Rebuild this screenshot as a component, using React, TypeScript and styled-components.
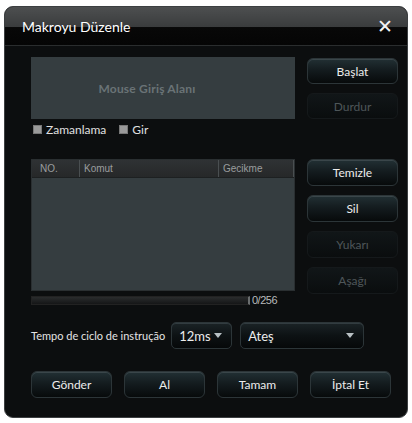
import React from 'react';
import styled, { createGlobalStyle } from 'styled-components';

const GlobalStyle = createGlobalStyle`
  html, body {
    margin: 0;
    padding: 0;
    background: #fff;
  }
  body {
    font-family: Lato, "Open Sans", sans-serif;
    font-weight: 400;
  }
`;

const Dialog = styled.div`
  margin: 6px 2px 3px 4px;
  width: 404px;
  height: 412px;
  box-sizing: border-box;
  border: 1px solid #3c3f41;
  border-radius: 9px;
  background: #0c0e0f;
  overflow: hidden;
  display: flex;
  flex-direction: column;
`;

const TitleBar = styled.div`
  height: 38px;
  flex: none;
  display: flex;
  align-items: center;
  justify-content: space-between;
  padding: 0 14px 0 17px;
  background: linear-gradient(#4d4f50 0%, #3a3c3d 52%, #080808 54%, #050505 100%);
  border-bottom: 1px solid #2a2d2e;
  color: #fff;
  font-size: 14px;
`;

const CloseButton = styled.span`
  font-family: "DejaVu Sans", sans-serif;
  font-size: 19px;
  font-weight: bold;
  line-height: 1;
  color: #f4f4f4;
`;

const Body = styled.div`
  flex: 1;
  padding: 11px 0 0 26px;
  display: flex;
  flex-direction: column;
`;

const Section = styled.div`
  display: grid;
  grid-template-columns: 264px 91px;
  column-gap: 12px;
  align-items: start;
`;

const LeftCol = styled.div`
  display: flex;
  flex-direction: column;
`;

const RightCol = styled.div<{ $top?: number }>`
  display: flex;
  flex-direction: column;
  gap: 9px;
  padding-top: ${p => p.$top || 0}px;
`;

const MouseArea = styled.div`
  height: 62px;
  background: #353d40;
  display: flex;
  align-items: center;
  justify-content: center;
  padding-right: 32px;
  color: #6a7376;
  font-weight: bold;
  font-size: 12px;
  letter-spacing: 0.2px;
`;

const CheckRow = styled.div`
  display: flex;
  align-items: center;
  height: 18px;
  margin-top: 1px;
  padding-left: 2px;
  gap: 13px;
`;

const CheckItem = styled.label`
  display: flex;
  align-items: center;
  gap: 4px;
  color: #e0e0e0;
  font-size: 12px;
`;

const Box = styled.span`
  width: 7px;
  height: 7px;
  background: #9a9a9a;
  border: 1px solid #777;
`;

const Button = styled.div<{ $disabled?: boolean; $h?: number }>`
  height: ${p => p.$h || 26}px;
  box-sizing: border-box;
  border-radius: 6px;
  display: flex;
  align-items: center;
  justify-content: center;
  font-size: 12px;
  color: ${p => (p.$disabled ? '#4e5659' : '#ececec')};
  border: 1px solid ${p => (p.$disabled ? '#15191b' : '#2c3538')};
  background: ${p =>
    p.$disabled
      ? 'linear-gradient(#111618, #0a0d0e)'
      : 'linear-gradient(#223034 0%, #141c1f 45%, #070a0b 100%)'};
  box-shadow: ${p => (p.$disabled ? 'none' : 'inset 0 1px 0 #3a464a')};
`;

const Table = styled.div`
  height: 132px;
  margin-top: 21px;
  background: #353d40;
  border: 1px solid #2a2f31;
  box-sizing: border-box;
  display: flex;
  flex-direction: column;
`;

const HeaderRow = styled.div`
  height: 17px;
  display: grid;
  grid-template-columns: 48px 139px 1fr;
  background: linear-gradient(#2f3234, #262829);
  border-bottom: 1px solid #1d2021;
`;

const HeaderCell = styled.div`
  font-family: "Liberation Sans", Arial, sans-serif;
  font-size: 10px;
  color: #9a9d9e;
  display: flex;
  align-items: center;
  padding-left: 4px;
  border-right: 1px solid #4a4f51;
  &:first-child { padding-left: 8px; }
`;

const ProgressRow = styled.div`
  display: flex;
  align-items: center;
  height: 14px;
  margin-top: 2px;
  gap: 2px;
`;

const ProgressTrack = styled.div`
  width: 216px;
  height: 7px;
  border: 1px solid #222;
  background: linear-gradient(#2a2c2d, #151617);
  border-right: 2px solid #6a6d6e;
`;

const Counter = styled.span`
  font-family: "Liberation Sans", Arial, sans-serif;
  font-size: 11px;
  letter-spacing: -0.5px;
  color: #b8bbbc;
`;

const TempoRow = styled.div`
  display: flex;
  align-items: center;
  margin-top: 15px;
  height: 27px;
`;

const TempoLabel = styled.span`
  font-size: 11px;
  color: #e4e4e4;
  white-space: nowrap;
  margin-right: 6px;
`;

const Select = styled.div<{ $w: number }>`
  width: ${p => p.$w}px;
  height: 27px;
  box-sizing: border-box;
  margin-right: 8px;
  border-radius: 5px;
  border: 1px solid #2c3538;
  background: linear-gradient(#1b2326 0%, #0d1214 50%, #060809 100%);
  box-shadow: inset 0 1px 0 #323c40;
  display: flex;
  align-items: center;
  justify-content: space-between;
  padding: 0 9px 0 7px;
  color: #ececec;
  font-size: 13px;
`;

const Arrow = styled.span`
  width: 0;
  height: 0;
  border-left: 4px solid transparent;
  border-right: 4px solid transparent;
  border-top: 5px solid #b8c0c4;
`;

const BottomRow = styled.div`
  display: flex;
  justify-content: space-between;
  width: 360px;
  margin-top: 22px;
`;

const WideButton = styled(Button)`
  width: 81px;
`;

export default function App() {
  return (
    <>
      <GlobalStyle />
      <Dialog>
        <TitleBar>
          <span>Makroyu Düzenle</span>
          <CloseButton>✕</CloseButton>
        </TitleBar>
        <Body>
          <Section>
            <LeftCol>
              <MouseArea>Mouse Giriş Alanı</MouseArea>
              <CheckRow>
                <CheckItem><Box />Zamanlama</CheckItem>
                <CheckItem><Box />Gir</CheckItem>
              </CheckRow>
            </LeftCol>
            <RightCol $top={1}>
              <Button>Başlat</Button>
              <Button $disabled>Durdur</Button>
            </RightCol>
          </Section>
          <Section>
            <LeftCol>
              <Table>
                <HeaderRow>
                  <HeaderCell>NO.</HeaderCell>
                  <HeaderCell>Komut</HeaderCell>
                  <HeaderCell>Gecikme</HeaderCell>
                </HeaderRow>
              </Table>
              <ProgressRow>
                <ProgressTrack />
                <Counter>0/256</Counter>
              </ProgressRow>
            </LeftCol>
            <RightCol $top={21}>
              <Button $h={27}>Temizle</Button>
              <Button $h={27}>Sil</Button>
              <Button $h={27} $disabled>Yukarı</Button>
              <Button $h={27} $disabled>Aşağı</Button>
            </RightCol>
          </Section>
          <TempoRow>
            <TempoLabel>Tempo de ciclo de instrução</TempoLabel>
            <Select $w={61}>12ms<Arrow /></Select>
            <Select $w={124}>Ateş<Arrow /></Select>
          </TempoRow>
          <BottomRow>
            <WideButton $h={27}>Gönder</WideButton>
            <WideButton $h={27}>Al</WideButton>
            <WideButton $h={27}>Tamam</WideButton>
            <WideButton $h={27}>İptal Et</WideButton>
          </BottomRow>
        </Body>
      </Dialog>
    </>
  );
}
